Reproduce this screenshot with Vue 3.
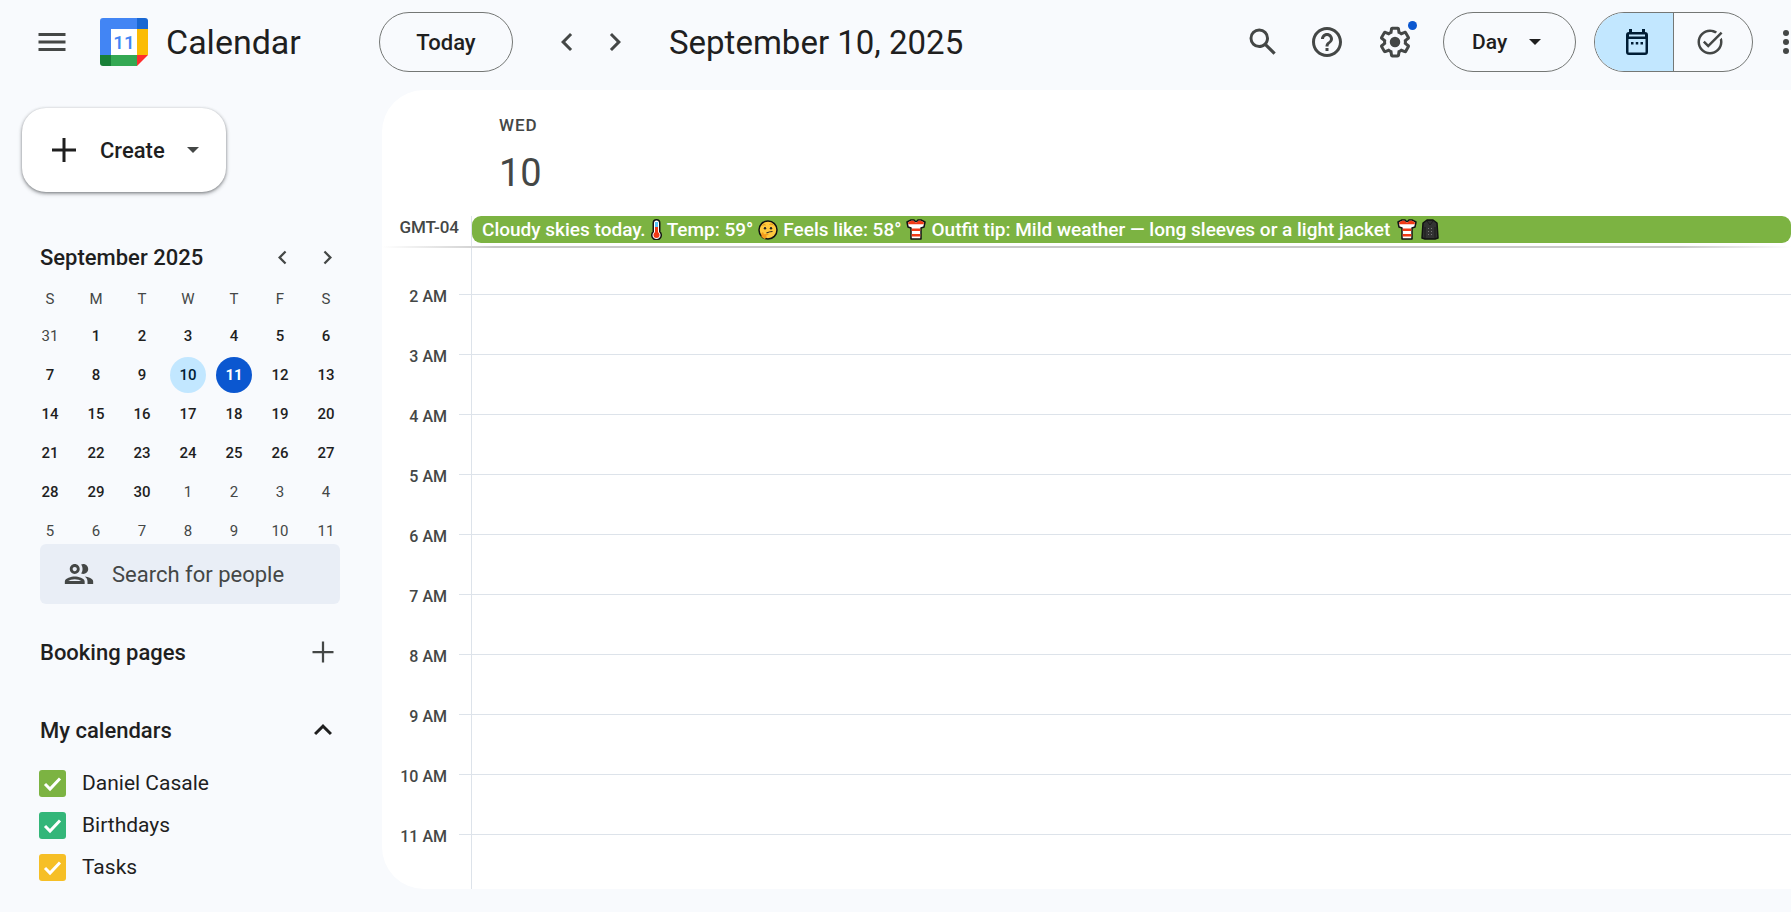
<template>
  <div class="app">

    <!-- ── Top bar ── -->
    <header class="topbar">
      <div class="brand">
        <button class="icon-btn" aria-label="Main menu">
          <svg width="36" height="36" viewBox="0 0 24 24"><path d="M3 18h18v-2H3v2zm0-5h18v-2H3v2zm0-7v2h18V6H3z" /></svg>
        </button>
        <svg class="logo" width="48" height="48" viewBox="0 0 48 48" aria-hidden="true">
          <path fill="#4285f4" d="M3 0h34v11H11v26H0V3a3 3 0 0 1 3-3z" />
          <path fill="#1967d2" d="M37 0h8a3 3 0 0 1 3 3v8H37z" />
          <path fill="#fbbc04" d="M37 11h11v26H37z" />
          <path fill="#34a853" d="M11 37h26v11H11z" />
          <path fill="#188038" d="M0 37h11v11H3a3 3 0 0 1-3-3z" />
          <path fill="#ff2d2d" d="M37 37h11L37 48z" />
          <path fill="#fff" d="M11 11h26v26H11z" />
          <text x="24" y="31" text-anchor="middle" font-size="19" font-weight="500" fill="#4285f4">11</text>
        </svg>
        <span class="brand-name">Calendar</span>
      </div>

      <button class="pill today">Today</button>
      <nav class="day-nav">
        <button class="icon-btn" aria-label="Previous day">
          <svg width="36" height="36" viewBox="0 0 24 24"><path :d="icons.left" /></svg>
        </button>
        <button class="icon-btn" aria-label="Next day">
          <svg width="36" height="36" viewBox="0 0 24 24"><path :d="icons.right" /></svg>
        </button>
      </nav>
      <h1 class="date-title">September 10, 2025</h1>

      <div class="tools">
        <button class="icon-btn" aria-label="Search">
          <svg width="36" height="36" viewBox="0 0 24 24"><path :d="icons.search" /></svg>
        </button>
        <button class="icon-btn" aria-label="Support">
          <svg width="36" height="36" viewBox="0 0 24 24"><path :d="icons.help" /></svg>
        </button>
        <button class="icon-btn settings" aria-label="Settings menu">
          <svg width="36" height="36" viewBox="0 0 24 24"><path :d="icons.gear" /><circle cx="12" cy="12" r="3.5" /></svg>
          <span class="dot"></span>
        </button>
      </div>

      <div class="view-picker">
        <select v-model="view" class="pill" aria-label="View">
          <option v-for="v in views" :key="v">{{ v }}</option>
        </select>
        <svg class="view-caret" width="12" height="6" viewBox="0 0 12 6"><path d="M0 0h12L6 6z" /></svg>
      </div>

      <div class="mode-switch">
        <button :class="{ active: mode === 'calendar' }" aria-label="Calendar" @click="mode = 'calendar'">
          <svg width="22" height="26" viewBox="0 0 22 26">
            <path fill-rule="evenodd" d="M3 0h3v3h10V0h3v3a3 3 0 0 1 3 3v17a3 3 0 0 1-3 3H3a3 3 0 0 1-3-3V6a3 3 0 0 1 3-3zM3 5.500v2h16v-2zM2.500 10v13.500h17V10z" />
            <path d="M5 13h2.500v2.500H5zM9.750 13h2.500v2.500h-2.500zM14.500 13H17v2.500h-2.500z" />
          </svg>
        </button>
        <button :class="{ active: mode === 'tasks' }" aria-label="Tasks" @click="mode = 'tasks'">
          <svg width="30" height="30" viewBox="0 0 24 24"><path :d="icons.task" /></svg>
        </button>
      </div>

      <button class="icon-btn more" aria-label="Google apps">
        <svg width="36" height="36" viewBox="0 0 24 24">
          <g v-for="y in [6, 12, 18]" :key="y">
            <circle v-for="x in [6, 12, 18]" :key="x" :cx="x" :cy="y" r="2" />
          </g>
        </svg>
      </button>
    </header>

    <div class="body">
      <!-- ── Sidebar ── -->
      <aside class="sidebar">
        <button class="create">
          <svg width="24" height="24" viewBox="0 0 24 24"><path d="M10.500 0h3v10.500H24v3H13.500V24h-3V13.500H0v-3h10.500z" /></svg>
          <span>Create</span>
          <svg class="create-caret" width="12" height="6" viewBox="0 0 12 6"><path d="M0 0h12L6 6z" /></svg>
        </button>

        <section class="mini">
          <div class="mini-head">
            <h2>September 2025</h2>
            <button class="icon-btn small" aria-label="Previous month">
              <svg width="27" height="27" viewBox="0 0 24 24"><path :d="icons.left" /></svg>
            </button>
            <button class="icon-btn small" aria-label="Next month">
              <svg width="27" height="27" viewBox="0 0 24 24"><path :d="icons.right" /></svg>
            </button>
          </div>
          <table class="mini-table">
            <thead>
              <tr>
                <th v-for="(d, i) in weekdays" :key="i">{{ d }}</th>
              </tr>
            </thead>
            <tbody>
              <tr v-for="(week, wi) in weeks" :key="wi">
                <td v-for="day in week" :key="day.key">
                  <button :class="{ other: day.other, selected: day.key === selected, today: day.key === today }">{{ day.n }}</button>
                </td>
              </tr>
            </tbody>
          </table>
        </section>

        <label class="people">
          <svg width="34" height="34" viewBox="0 0 24 24"><path :d="icons.people" /></svg>
          <input type="text" placeholder="Search for people" aria-label="Search for people" />
        </label>

        <div class="side-head">
          <h2>Booking pages</h2>
          <button class="icon-btn small" aria-label="Create booking page">
            <svg width="36" height="36" viewBox="0 0 24 24"><path d="M11.250 5h1.500v6.250H19v1.500h-6.250V19h-1.500v-6.250H5v-1.500h6.250z" /></svg>
          </button>
        </div>

        <div class="side-head">
          <h2>My calendars</h2>
          <button class="icon-btn small dark" aria-label="Collapse" @click="open = !open">
            <svg width="36" height="36" viewBox="0 0 24 24"><path d="M12 8l-6 6 1.410 1.410L12 10.830l4.590 4.580L18 14z" /></svg>
          </button>
        </div>
        <ul v-if="open" class="calendars">
          <li v-for="c in calendars" :key="c.name">
            <label>
              <span class="check">
                <input v-model="c.on" type="checkbox" :style="{ backgroundColor: c.color }" />
                <svg v-if="c.on" width="27" height="27" viewBox="0 0 27 27"><path d="M6 14l5 5L21 8.500" /></svg>
              </span>
              {{ c.name }}
            </label>
          </li>
        </ul>
      </aside>

      <!-- ── Day view ── -->
      <main class="day">
        <div class="day-head">
          <div class="weekday">WED</div>
          <div class="day-number">10</div>
        </div>

        <div class="all-day">
          <span class="tz">GMT-04</span>
          <div class="all-day-slot">
            <a href="#" class="event">
              <span>Cloudy skies today.</span>
              <svg width="11" height="21" viewBox="0 0 11 21" role="img" aria-label="thermometer">
                <path d="M3 4a2.500 2.500 0 0 1 5 0v9a4 4 0 1 1-5 0z" fill="#fff" stroke="#111" stroke-width="3" />
                <path d="M3 4a2.500 2.500 0 0 1 5 0v9a4 4 0 1 1-5 0z" fill="#fff" />
                <path d="M4 3h3v5H4z" fill="#5bc4f5" />
                <path d="M4 8h3v7H4z" fill="#f03a17" />
                <circle cx="5.500" cy="16" r="3" fill="#f03a17" />
              </svg>
              <span>Temp: 59°</span>
              <svg width="20" height="20" viewBox="0 0 20 20" role="img" aria-label="thinking">
                <circle cx="10" cy="10" r="9" fill="#ffc83d" stroke="#111" stroke-width="1.500" />
                <path d="M4.500 5.500c1-1 2-1 3-.5M11.500 4.500c1.500-.8 3-.3 3.800.7" fill="none" stroke="#d68a12" />
                <circle cx="7" cy="8.300" r="1.200" fill="#222" /><circle cx="13" cy="8.300" r="1.200" fill="#222" />
                <path d="M8.500 13q3-1.500 6-1.500" fill="none" stroke="#222" stroke-width="1.200" />
                <path d="M3.500 17v-4l1.500-1 1 2.200 4.500-.5-.2 1.300-2 .6.400 2-2 1.400z" fill="#f59b1c" />
              </svg>
              <span>Feels like: 58°</span>
              <svg width="20" height="21" viewBox="0 0 20 21" role="img" aria-label="t-shirt"><use href="#shirt" /></svg>
              <span>Outfit tip: Mild weather — long sleeves or a light jacket</span>
              <span class="pair">
                <svg width="20" height="21" viewBox="0 0 20 21" role="img" aria-label="t-shirt">
                  <g id="shirt">
                    <path d="M5 1h3q2 3 4 0h3l4 2-1 5-3 1v11H5V9L2 8 1 3z" fill="#fff" stroke="#111" stroke-width="1.500" stroke-linejoin="round" />
                    <path d="M5 1.800h2.500q2.500 3.400 5 0H15l3 1.700-.4 1.700H2.400L2 3.500zM5.700 9.500h8.600V12H5.700zM5.700 15h8.600v2.500H5.700z" fill="#f03a17" />
                  </g>
                </svg>
                <svg width="18" height="21" viewBox="0 0 18 21" role="img" aria-label="coat">
                  <path d="M6 1h6l4 3 1 15-3 1H4l-3-1L2 4z" fill="#333" stroke="#111" stroke-width="1.500" stroke-linejoin="round" />
                  <path d="M6 2l3 4 3-4M4 8v11M14 8v11" fill="none" stroke="#1c1c1c" />
                  <path d="M7 9h1v1H7zM10 9h1v1h-1zM7 12h1v1H7zM10 12h1v1h-1zM7 15h1v1H7zM10 15h1v1h-1z" fill="#777" />
                </svg>
              </span>
            </a>
          </div>
        </div>
        <div class="head-shadow"></div>

        <div class="hours">
          <div class="hour first">
            <span></span>
            <div class="tick"></div>
            <div class="slot"></div>
          </div>
          <div v-for="h in hours" :key="h" class="hour">
            <span>{{ h }}</span>
            <div class="tick"></div>
            <div class="slot"></div>
          </div>
        </div>
      </main>
    </div>
  </div>
</template>

<script setup>
import { ref } from 'vue'

const views = ['Day', 'Week', 'Month', 'Year', 'Schedule']
const view  = ref('Day')
const mode  = ref('calendar')
const open  = ref(true)

// ── Mini calendar ──
const weekdays = ['S', 'M', 'T', 'W', 'T', 'F', 'S']
const selected = '2025-9-10'
const today    = '2025-9-11'

function buildWeeks(year, month) {
  const first = new Date(year, month, 1).getDay()
  return Array.from({ length: 6 }, (_, w) =>
    Array.from({ length: 7 }, (_, d) => {
      const date = new Date(year, month, 1 - first + w * 7 + d)
      return {
        n: date.getDate(),
        other: date.getMonth() !== month,
        key: `${date.getFullYear()}-${date.getMonth() + 1}-${date.getDate()}`
      }
    })
  )
}
const weeks = buildWeeks(2025, 8)

const hours = Array.from({ length: 10 }, (_, i) => `${i + 2} AM`)

const calendars = ref([
  { name: 'Daniel Casale', color: '#7cb342', on: true },
  { name: 'Birthdays', color: '#33b679', on: true },
  { name: 'Tasks', color: '#f6bf26', on: true }
])

const icons = {
  left: 'M15.41 7.41L14 6l-6 6 6 6 1.41-1.41L10.83 12z',
  right: 'M10 6L8.59 7.41 13.17 12l-4.58 4.59L10 18l6-6z',
  search: 'M20.49 19l-5.73-5.73C15.53 12.2 16 10.91 16 9.5A6.5 6.5 0 1 0 9.5 16c1.41 0 2.7-.47 3.77-1.24L19 20.49 20.49 19zM5 9.5C5 7.01 7.01 5 9.5 5S14 7.01 14 9.5 11.99 14 9.5 14 5 11.99 5 9.5z',
  help: 'M11 18h2v-2h-2v2zm1-16C6.48 2 2 6.48 2 12s4.48 10 10 10 10-4.48 10-10S17.52 2 12 2zm0 18c-4.41 0-8-3.59-8-8s3.59-8 8-8 8 3.59 8 8-3.59 8-8 8zm0-14c-2.21 0-4 1.79-4 4h2c0-1.1.9-2 2-2s2 .9 2 2c0 2-3 1.75-3 5h2c0-2.25 3-2.5 3-5 0-2.21-1.79-4-4-4z',
  gear: 'M13.85 22.25h-3.7c-.74 0-1.36-.54-1.45-1.27l-.27-1.89c-.27-.14-.53-.29-.79-.46l-1.8.72c-.7.26-1.47-.03-1.81-.65L2.2 15.53c-.35-.66-.2-1.44.36-1.88l1.53-1.19c-.01-.15-.02-.3-.02-.46 0-.15.01-.31.02-.46l-1.52-1.19c-.59-.45-.74-1.26-.37-1.88l1.85-3.19c.34-.62 1.11-.9 1.79-.63l1.81.73c.26-.17.52-.32.78-.46l.27-1.91c.09-.7.71-1.25 1.44-1.25h3.7c.74 0 1.36.54 1.45 1.27l.27 1.89c.27.14.53.29.79.46l1.8-.72c.71-.26 1.48.03 1.82.65l1.84 3.18c.36.66.2 1.44-.36 1.88l-1.52 1.19c.01.15.02.3.02.46s-.01.31-.02.46l1.52 1.19c.56.45.72 1.23.37 1.86l-1.86 3.22c-.34.62-1.11.9-1.8.63l-1.8-.72c-.26.17-.52.32-.78.46l-.27 1.91c-.1.68-.72 1.22-1.46 1.22zm-3.23-2h2.76l.37-2.55.53-.22c.44-.18.88-.44 1.34-.78l.45-.34 2.38.96 1.38-2.4-2.03-1.58.07-.56c.03-.26.06-.51.06-.78s-.03-.53-.06-.78l-.07-.56 2.03-1.58-1.39-2.4-2.39.96-.45-.35c-.42-.32-.87-.58-1.33-.77l-.52-.22-.37-2.55h-2.76l-.37 2.55-.53.21c-.44.19-.88.44-1.34.79l-.45.33-2.38-.95-1.39 2.39 2.03 1.58-.07.56a7 7 0 0 0-.06.79c0 .26.02.53.06.78l.07.56-2.03 1.58 1.38 2.4 2.39-.96.45.35c.43.33.86.58 1.33.77l.53.22.38 2.55z',
  task: 'M22 5.18L10.59 16.6l-4.24-4.24 1.41-1.41 2.83 2.83 10-10L22 5.18zm-2.21 5.04c.13.57.21 1.17.21 1.78 0 4.42-3.58 8-8 8s-8-3.58-8-8 3.58-8 8-8c1.58 0 3.04.46 4.28 1.25l1.44-1.44C16.1 2.67 14.13 2 12 2 6.48 2 2 6.48 2 12s4.48 10 10 10 10-4.48 10-10c0-1.19-.22-2.33-.6-3.39l-1.61 1.61z',
  people: 'M9 13.75c-2.34 0-7 1.17-7 3.5V19h14v-1.75c0-2.33-4.66-3.5-7-3.5zM4.34 17c.84-.58 2.87-1.25 4.66-1.25s3.82.67 4.66 1.25H4.34zM9 12c1.93 0 3.5-1.57 3.5-3.5S10.93 5 9 5 5.5 6.57 5.5 8.5 7.07 12 9 12zm0-5c.83 0 1.5.67 1.5 1.5S9.83 10 9 10s-1.5-.67-1.5-1.5S8.17 7 9 7zm7.04 6.81c1.16.84 1.96 1.96 1.96 3.44V19h4v-1.75c0-2.02-3.5-3.17-5.96-3.44zM15 12c1.93 0 3.5-1.57 3.5-3.5S16.93 5 15 5c-.54 0-1.04.13-1.5.35.63.89 1 1.98 1 3.15s-.37 2.26-1 3.15c.46.22.96.35 1.5.35z'
}
</script>

<style>
body {
  margin: 0;
  background: #f8fafd;
}
</style>

<style scoped>
.app {
  display: flex;
  flex-direction: column;
  height: 100vh;
  overflow: hidden;
  background: #f8fafd;
  color: #1f1f1f;
  font-family: Roboto, "Liberation Sans", sans-serif;
  font-size: 21px;
}

button, select, input { font: inherit; color: inherit; }
button { border: none; background: none; padding: 0; cursor: pointer; }
h1 { margin: 0; font-weight: 400; }
h2 { margin: 0; font-size: 22px; font-weight: 500; white-space: nowrap; }
svg { display: block; flex: none; fill: currentColor; }

.icon-btn {
  display: flex;
  align-items: center;
  justify-content: center;
  flex: none;
  width: 48px;
  height: 48px;
  color: #444746;
}
.icon-btn.small { width: 45px; }
.icon-btn.dark  { color: #1f1f1f; }

/* ── Top bar ── */
.topbar {
  display: flex;
  align-items: center;
  flex: none;
  height: 84px;
  margin-bottom: 6px;
}

.brand {
  display: flex;
  align-items: center;
  flex: none;
  width: 351px;
  padding-left: 28px;
}
.logo { margin-left: 24px; }
.brand-name { margin-left: 18px; font-size: 34px; }

.pill {
  box-sizing: border-box;
  height: 60px;
  border: 1px solid #747775;
  border-radius: 30px;
  background: transparent;
  font-weight: 500;
}
.pill.today { flex: none; width: 134px; font-size: 22px; }

.day-nav { display: flex; margin-left: 30px; }

.date-title { margin-left: 30px; font-size: 33px; white-space: nowrap; }

.tools { display: flex; gap: 16px; margin-left: auto; }
.settings { position: relative; margin-left: 4px; }
.dot {
  position: absolute;
  top: 3px;
  right: 2px;
  width: 9px;
  height: 9px;
  border-radius: 50%;
  background: #0b57d0;
}

.view-picker { position: relative; margin-left: 24px; }
.view-picker select {
  width: 133px;
  padding: 0 48px 0 28px;
  appearance: none;
}
.view-caret { position: absolute; right: 35px; top: 27px; pointer-events: none; }

.mode-switch {
  display: flex;
  box-sizing: border-box;
  flex: none;
  width: 159px;
  height: 60px;
  margin-left: 18px;
  border: 1px solid #747775;
  border-radius: 30px;
  overflow: hidden;
}
.mode-switch button {
  display: flex;
  align-items: center;
  justify-content: center;
  box-sizing: border-box;
  flex: 1;
  padding-left: 6px;
  color: #444746;
}
.mode-switch button + button { padding: 0 6px 0 0; border-left: 1px solid #747775; }
.mode-switch .active { background: #c2e7ff; color: #001d35; }

.more { margin-left: 18px; margin-right: -28px; }

/* ── Sidebar ── */
.body { display: flex; flex: 1; min-height: 0; }

.sidebar { flex: none; width: 382px; padding-top: 18px; box-sizing: border-box; }

.create {
  display: flex;
  align-items: center;
  width: 204px;
  height: 84px;
  margin-left: 22px;
  padding-left: 30px;
  border-radius: 24px;
  background: #fff;
  box-shadow: 0 1px 3px rgba(60, 64, 67, .5), 0 2px 4px rgba(60, 64, 67, .3);
  font-size: 22px;
  font-weight: 500;
}
.create span { margin-left: 24px; }
.create-caret { margin-left: 22px; color: #444746; }

.mini { margin-top: 40px; }
.mini-head {
  display: flex;
  align-items: center;
  height: 50px;
  padding: 0 32px 0 40px;
}
.mini-head h2 { flex: 1; }

.mini-table {
  margin-left: 27px;
  border-collapse: collapse;
  font-size: 15px;
  font-weight: 500;
}
.mini-table th {
  width: 46px;
  height: 34px;
  padding: 0;
  color: #444746;
  font-weight: 400;
}
.mini-table td { height: 39px; padding: 0; }
.mini-table button {
  display: block;
  width: 36px;
  height: 36px;
  margin: 0 auto;
  border-radius: 50%;
}
.mini-table .other    { color: #444746; font-weight: 400; }
.mini-table .selected { background: #c2e7ff; color: #001d35; }
.mini-table .today    { background: #0b57d0; color: #fff; font-weight: 700; }

.people {
  position: relative;
  display: flex;
  align-items: center;
  height: 60px;
  margin: -6px 42px 0 40px;
  padding-left: 22px;
  border-radius: 6px;
  background: #e9eef6;
  color: #444746;
}
.people input {
  flex: 1;
  min-width: 0;
  margin-left: 16px;
  padding: 0;
  border: none;
  outline: none;
  background: transparent;
  font-size: 22px;
}
.people input::placeholder { color: #444746; opacity: 1; }

.side-head {
  display: flex;
  align-items: center;
  justify-content: space-between;
  height: 48px;
  margin-top: 24px;
  padding: 0 37px 0 40px;
}
.side-head + .side-head { margin-top: 30px; }

.calendars { margin: 8px 0 0; padding: 0; list-style: none; }
.calendars label {
  display: flex;
  align-items: center;
  gap: 16px;
  height: 42px;
  padding-left: 39px;
}
.check { display: grid; }
.check > * { grid-area: 1 / 1; }
.check input {
  width: 27px;
  height: 27px;
  margin: 0;
  border-radius: 3px;
  appearance: none;
}
.check svg {
  fill: none;
  stroke: #fff;
  stroke-width: 3;
  pointer-events: none;
}

/* ── Day view ── */
.day {
  display: flex;
  flex-direction: column;
  flex: 1;
  min-width: 0;
  margin-bottom: 23px;
  border-radius: 42px 0 0 42px;
  background: #fff;
  color: #444746;
  overflow: hidden;
}

.day-head { flex: none; height: 126px; padding-left: 117px; }
.weekday {
  padding-top: 25px;
  font-size: 17px;
  font-weight: 500;
  line-height: 20px;
  letter-spacing: 1px;
}
.day-number { margin-top: 14px; font-size: 38px; line-height: 48px; }

.all-day { display: flex; flex: none; height: 30px; }
.tz {
  box-sizing: border-box;
  width: 89px;
  padding-right: 12px;
  font-size: 17px;
  font-weight: 500;
  line-height: 22px;
  text-align: right;
}
.all-day-slot { flex: 1; min-width: 0; border-left: 1px solid #dde3ea; }
.event {
  display: flex;
  align-items: center;
  gap: 5px;
  height: 27px;
  padding-left: 10px;
  border-radius: 9px;
  background: #7cb342;
  color: #fff;
  font-size: 19px;
  font-weight: 500;
  text-decoration: none;
  white-space: nowrap;
}
.pair { display: flex; gap: 4px; margin-left: 2px; }

.head-shadow {
  flex: none;
  height: 2px;
  background: linear-gradient(to right, #fff, #c9c9c9 8%, #c9c9c9 92%, #fff);
}

.hours { flex: 1; min-height: 0; overflow: hidden; }
.hour { display: flex; height: 60px; }
.hour.first { height: 46px; }
.hour span {
  box-sizing: border-box;
  width: 77px;
  padding-right: 12px;
  font-size: 16px;
  font-weight: 500;
  line-height: 6px;
  text-align: right;
  white-space: nowrap;
}
.tick { width: 12px; border-top: 1px solid #dde3ea; }
.slot { flex: 1; border-left: 1px solid #dde3ea; border-top: 1px solid #dde3ea; }
.first .tick, .first .slot { border-top: none; }
</style>
